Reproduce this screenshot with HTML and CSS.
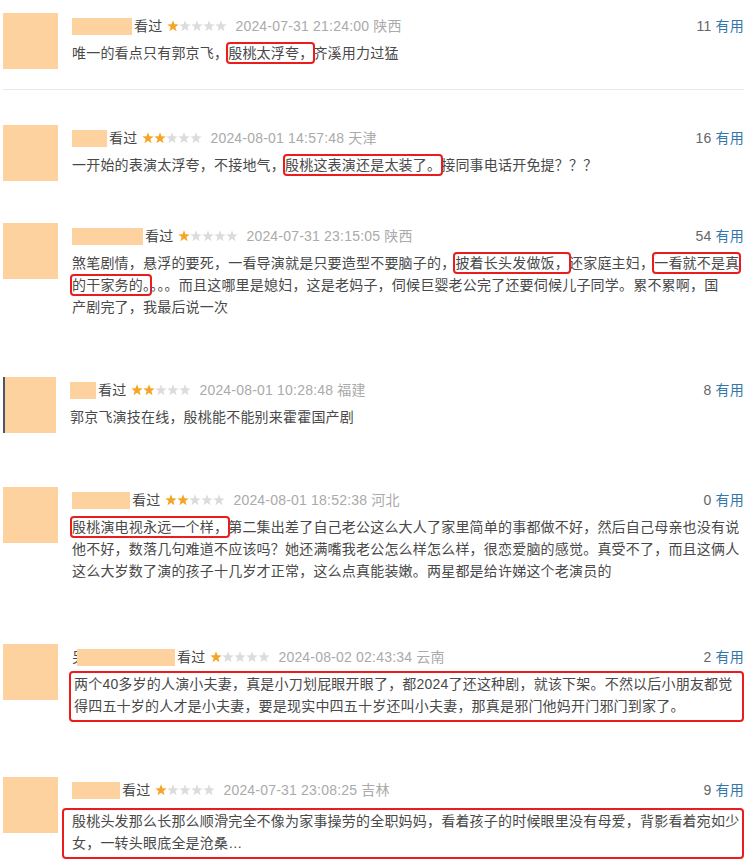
FILE: index.html
```html
<!DOCTYPE html>
<html lang="zh-CN">
<head>
  <meta charset="UTF-8">
  <meta name="viewport" content="width=device-width, initial-scale=1.0">
  <title>短评</title>
  <link rel="stylesheet" href="styles.css">
</head>
<body>
  <svg class="sprite" aria-hidden="true">
    <symbol id="star" viewBox="0 0 12 12">
      <path d="M6 .3L7.47 4.28 11.71 4.45 8.38 7.07 9.53 11.15 6 8.8 2.47 11.15 3.62 7.07 .29 4.45 4.53 4.28z"/>
    </symbol>
  </svg>

  <div class="comments">

    <div class="comment">
      <div class="avatar"></div>
      <div class="comment-body">
        <div class="meta">
          <span class="name n60"></span>
          <span class="watched">看过</span>
          <span class="stars">
            <svg class="on"><use href="#star"/></svg><svg><use href="#star"/></svg><svg><use href="#star"/></svg><svg><use href="#star"/></svg><svg><use href="#star"/></svg>
          </span>
          <span class="time">2024-07-31 21:24:00 陕西</span>
          <span class="votes">11 <a href="#">有用</a></span>
        </div>
        <p class="short">唯一的看点只有郭京飞，<span class="mark">殷桃太浮夸，</span>齐溪用力过猛</p>
      </div>
    </div>

    <div class="comment">
      <div class="avatar"></div>
      <div class="comment-body">
        <div class="meta">
          <span class="name n35"></span>
          <span class="watched">看过</span>
          <span class="stars">
            <svg class="on"><use href="#star"/></svg><svg class="on"><use href="#star"/></svg><svg><use href="#star"/></svg><svg><use href="#star"/></svg><svg><use href="#star"/></svg>
          </span>
          <span class="time">2024-08-01 14:57:48 天津</span>
          <span class="votes">16 <a href="#">有用</a></span>
        </div>
        <p class="short">一开始的表演太浮夸，不接地气，<span class="mark">殷桃这表演还是太装了。</span>接同事电话开免提？？？</p>
      </div>
    </div>

    <div class="comment">
      <div class="avatar"></div>
      <div class="comment-body">
        <div class="meta">
          <span class="name n71"></span>
          <span class="watched">看过</span>
          <span class="stars">
            <svg class="on"><use href="#star"/></svg><svg><use href="#star"/></svg><svg><use href="#star"/></svg><svg><use href="#star"/></svg><svg><use href="#star"/></svg>
          </span>
          <span class="time">2024-07-31 23:15:05 陕西</span>
          <span class="votes">54 <a href="#">有用</a></span>
        </div>
        <p class="short">煞笔剧情，悬浮的要死，一看导演就是只要造型不要脑子的，<span class="mark">披着长头发做饭，</span>还家庭主妇，<span class="mark">一看就不是真</span><br><span class="mark">的干家务的。</span>。。。而且这哪里是媳妇，这是老妈子，伺候巨婴老公完了还要伺候儿子同学。累不累啊，国<br>产剧完了，我最后说一次</p>
      </div>
    </div>

    <div class="comment">
      <div class="avatar edge"></div>
      <div class="comment-body">
        <div class="meta">
          <span class="name n26"></span>
          <span class="watched">看过</span>
          <span class="stars">
            <svg class="on"><use href="#star"/></svg><svg class="on"><use href="#star"/></svg><svg><use href="#star"/></svg><svg><use href="#star"/></svg><svg><use href="#star"/></svg>
          </span>
          <span class="time">2024-08-01 10:28:48 福建</span>
          <span class="votes">8 <a href="#">有用</a></span>
        </div>
        <p class="short">郭京飞演技在线，殷桃能不能别来霍霍国产剧</p>
      </div>
    </div>

    <div class="comment">
      <div class="avatar"></div>
      <div class="comment-body">
        <div class="meta">
          <span class="name n58"></span>
          <span class="watched">看过</span>
          <span class="stars">
            <svg class="on"><use href="#star"/></svg><svg class="on"><use href="#star"/></svg><svg><use href="#star"/></svg><svg><use href="#star"/></svg><svg><use href="#star"/></svg>
          </span>
          <span class="time">2024-08-01 18:52:38 河北</span>
          <span class="votes">0 <a href="#">有用</a></span>
        </div>
        <p class="short"><span class="mark">殷桃演电视永远一个样，</span>第二集出差了自己老公这么大人了家里简单的事都做不好，然后自己母亲也没有说<br>他不好，数落几句难道不应该吗？她还满嘴我老公怎么样怎么样，很恋爱脑的感觉。真受不了，而且这俩人<br>这么大岁数了演的孩子十几岁才正常，这么点真能装嫩。两星都是给许娣这个老演员的</p>
      </div>
    </div>

    <div class="comment">
      <div class="avatar"></div>
      <div class="comment-body">
        <div class="meta">
          <span class="peek">另</span><span class="name n98"></span>
          <span class="watched">看过</span>
          <span class="stars">
            <svg class="on"><use href="#star"/></svg><svg><use href="#star"/></svg><svg><use href="#star"/></svg><svg><use href="#star"/></svg><svg><use href="#star"/></svg>
          </span>
          <span class="time">2024-08-02 02:43:34 云南</span>
          <span class="votes">2 <a href="#">有用</a></span>
        </div>
        <p class="short boxed">两个40多岁的人演小夫妻，真是小刀划屁眼开眼了，都2024了还这种剧，就该下架。不然以后小朋友都觉<br>得四五十岁的人才是小夫妻，要是现实中四五十岁还叫小夫妻，那真是邪门他妈开门邪门到家了。</p>
      </div>
    </div>

    <div class="comment">
      <div class="avatar"></div>
      <div class="comment-body">
        <div class="meta">
          <span class="name n48"></span>
          <span class="watched">看过</span>
          <span class="stars">
            <svg class="on"><use href="#star"/></svg><svg><use href="#star"/></svg><svg><use href="#star"/></svg><svg><use href="#star"/></svg><svg><use href="#star"/></svg>
          </span>
          <span class="time">2024-07-31 23:08:25 吉林</span>
          <span class="votes">9 <a href="#">有用</a></span>
        </div>
        <p class="short boxed wide">殷桃头发那么长那么顺滑完全不像为家事操劳的全职妈妈，看着孩子的时候眼里没有母爱，背影看着宛如少<br>女，一转头眼底全是沧桑…</p>
      </div>
    </div>

  </div>
</body>
</html>
```

FILE: styles.css
```css
body {
  margin: 0;
  background: #fff;
  font-family: "Liberation Sans", "Noto Sans CJK SC", sans-serif;
  font-size: 14px;
  color: #494949;
  letter-spacing: 0.2px;
}

.sprite {
  display: none;
}

.comments {
  padding: 13px 3px 0 3px;
}

.comment {
  display: flex;
  gap: 14px;
}

/* spacing between the stitched items */
.comment:nth-child(1) {
  padding-bottom: 20px;
  border-bottom: 1px solid #e8e8e8;
}
.comment:nth-child(2) { margin-top: 35px; }
.comment:nth-child(3) { margin-top: 42px; }
.comment:nth-child(4) { margin-top: 59px; }
.comment:nth-child(5) { margin-top: 54px; }
.comment:nth-child(6) { margin-top: 62px; }
.comment:nth-child(7) { margin-top: 55px; }

.avatar {
  width: 55px;
  height: 56px;
  flex-shrink: 0;
  background: #fdd29e;
}

.avatar.edge {
  border-left: 2px solid #4b5668;
  width: 51px;
}

.comment-body {
  flex: 1;
  min-width: 0;
  padding-top: 2px;
}

.meta {
  display: flex;
  align-items: center;
  height: 22px;
  line-height: 22px;
}

.name {
  height: 17px;
  margin-right: 2px;
  background: #fdd29e;
}

.n26 { width: 26px; }
.n35 { width: 35px; }
.n48 { width: 48px; }
.n58 { width: 58px; }
.n60 { width: 60px; }
.n71 { width: 71px; }
.n98 { width: 98px; }

.peek {
  display: inline-block;
  width: 5px;
  overflow: hidden;
  white-space: nowrap;
}

.watched {
  color: #494949;
}

.stars {
  display: flex;
  margin: 0 8px 0 5px;
}

.stars svg {
  width: 12px;
  height: 12px;
  fill: #dcdcdc;
}

.stars svg.on {
  fill: #f5a523;
}

.time {
  color: #aaa;
}

.votes {
  margin-left: auto;
  color: #666;
}

.votes a {
  color: #37a;
  text-decoration: none;
}

.short {
  margin: 5px 0 0;
  line-height: 22px;
  white-space: nowrap;
}

.mark {
  border: 2px solid #ec1c1c;
  border-radius: 4px;
  padding: 1px 0;
  margin: 0 -2px;
}

.short.boxed {
  margin: 3px 0 0 -3px;
  padding: 0 3px 3px;
  border: 2px solid #ec1c1c;
  border-radius: 4px;
}

.short.boxed.wide {
  margin: 7px 0 0 -10px;
  padding-left: 8px;
}
```
